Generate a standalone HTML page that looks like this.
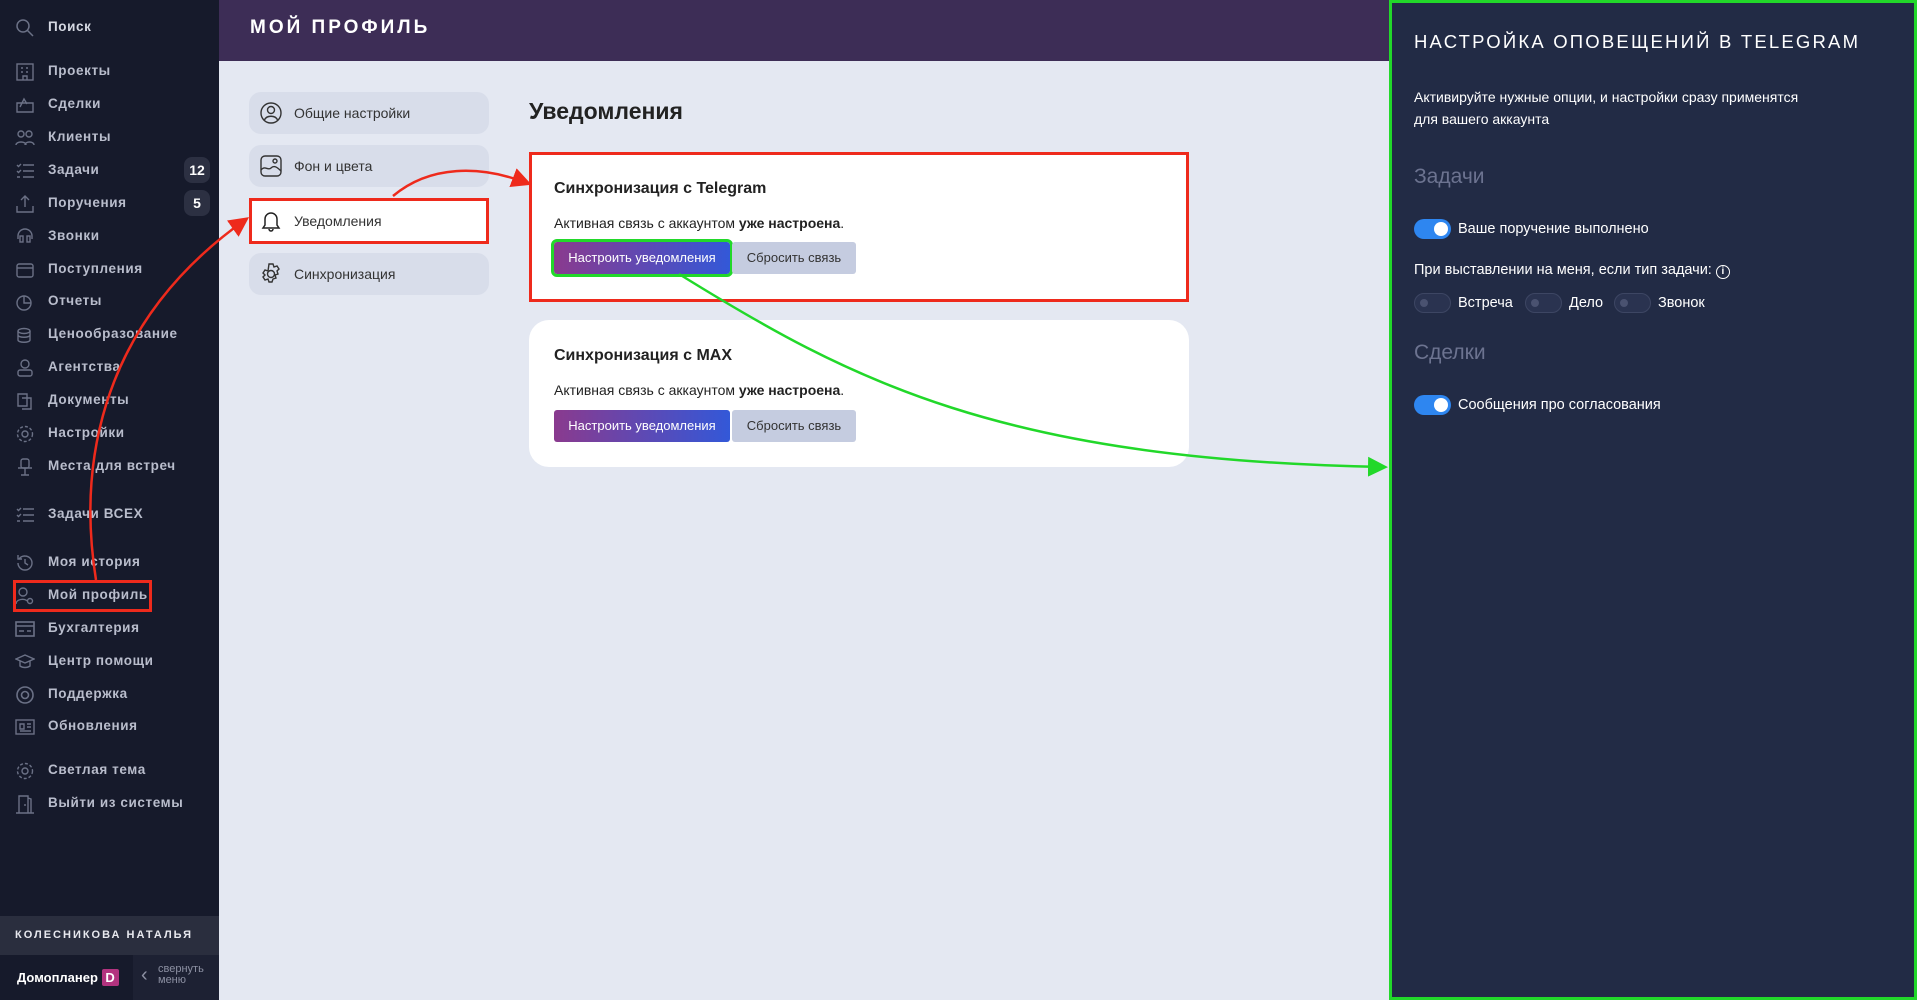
<!DOCTYPE html>
<html><head><meta charset="utf-8"><style>
*{box-sizing:border-box;margin:0;padding:0}
body{width:1917px;height:1000px;overflow:hidden;background:#e4e8f2;font-family:"Liberation Sans",sans-serif;position:relative}
.sb{position:absolute;left:0;top:0;width:219px;height:1000px;background:#161a2b}
.it{position:absolute;left:0;width:219px;height:24px;color:#b9bdcc;font-size:13.5px;font-weight:bold;letter-spacing:.6px;line-height:24px}
.it span{position:absolute;left:48px}
.it svg{position:absolute;left:15px;top:3px}
.badge{position:absolute;right:9px;top:-1px;background:#2c3042;color:#fff;border-radius:8px;width:26px;height:26px;text-align:center;line-height:26px;font-size:14px;letter-spacing:0}
.hdr{position:absolute;left:219px;top:0;width:1171px;height:61px;background:#3d2d56;color:#fff;font-size:19px;letter-spacing:3px;padding:17px 0 0 31px;font-weight:bold}
.mi{position:absolute;left:249px;width:240px;height:42px;background:#d8ddea;border-radius:12px;font-size:14px;color:#333;line-height:42px;padding-left:45px}
.mi svg{position:absolute;left:11px;top:10px}
.card{position:absolute;left:529px;width:660px;background:#fff;border-radius:20px}
.ct{position:absolute;left:25px;font-size:16px;font-weight:bold;color:#222}
.cx{position:absolute;left:25px;font-size:14px;color:#222}
.b1{position:absolute;left:25px;width:176px;height:32px;border-radius:3px;background:linear-gradient(90deg,#8a3a8e,#3358d8);color:#fff;font-size:13px;text-align:center;line-height:32px}
.b2{position:absolute;left:203px;width:124px;height:32px;border-radius:3px;background:#c5cce0;color:#333;font-size:13px;text-align:center;line-height:32px}
.rp{position:absolute;left:1389px;top:0;width:528px;height:1000px;background:#222b45;border:3px solid #22d82a;color:#fff}
.tg{position:absolute;width:37px;height:20px;border-radius:10px;background:#2e86f0}
.tg::after{content:"";position:absolute;right:3px;top:3px;width:14px;height:14px;border-radius:50%;background:#fff}
.tf{position:absolute;width:37px;height:20px;border-radius:10px;background:#2a3350;border:1px solid #3d4663}
.tf::after{content:"";position:absolute;left:5px;top:5px;width:8px;height:8px;border-radius:50%;background:#4a5270}
.rl{position:absolute;font-size:14.5px;color:#fff}
</style></head><body>
<div class="sb">
<div class="it" style="top:15px"><svg width="20" height="20" viewBox="0 0 20 20" fill="none" stroke="#6b7186" stroke-width="1.5"><circle cx="8" cy="8" r="6"/><path d="M12.5 12.5L18 18"/></svg><span style="color:#d5d8e2">Поиск</span></div>
<div class="it" style="top:59px"><svg width="20" height="20" viewBox="0 0 20 20" fill="none" stroke="#6b7186" stroke-width="1.4"><rect x="2" y="2" width="16" height="16"/><path d="M6 6h2M11 6h2M6 10h2M11 10h2M8 18v-4h4v4"/></svg><span>Проекты</span></div>
<div class="it" style="top:92px"><svg width="20" height="20" viewBox="0 0 20 20" fill="none" stroke="#6b7186" stroke-width="1.4"><path d="M2 8h16v9H2zM5 12l4-8 3 5"/></svg><span>Сделки</span></div>
<div class="it" style="top:125px"><svg width="20" height="20" viewBox="0 0 20 20" fill="none" stroke="#6b7186" stroke-width="1.4"><circle cx="6" cy="6" r="3"/><circle cx="14" cy="6" r="3"/><path d="M1 17c0-4 10-4 10 0M10 17c0-4 9-4 9 0"/></svg><span>Клиенты</span></div>
<div class="it" style="top:158px"><svg width="20" height="20" viewBox="0 0 20 20" fill="none" stroke="#6b7186" stroke-width="1.4"><path d="M8 4h11M8 10h11M8 16h11M2 4l1.5 1.5L6 3M2 10l1.5 1.5L6 9M2 16h3"/></svg><span>Задачи</span><div class="badge">12</div></div>
<div class="it" style="top:191px"><svg width="20" height="20" viewBox="0 0 20 20" fill="none" stroke="#6b7186" stroke-width="1.4"><path d="M2 12v6h16v-6M10 13V2M6 6l4-4 4 4"/></svg><span>Поручения</span><div class="badge">5</div></div>
<div class="it" style="top:224px"><svg width="20" height="20" viewBox="0 0 20 20" fill="none" stroke="#6b7186" stroke-width="1.4"><path d="M3 12V9a7 7 0 0114 0v3"/><rect x="5" y="9" width="3" height="6"/><rect x="12" y="9" width="3" height="6"/></svg><span>Звонки</span></div>
<div class="it" style="top:257px"><svg width="20" height="20" viewBox="0 0 20 20" fill="none" stroke="#6b7186" stroke-width="1.4"><rect x="2" y="4" width="16" height="13" rx="2"/><path d="M2 8h16"/></svg><span>Поступления</span></div>
<div class="it" style="top:289px"><svg width="20" height="20" viewBox="0 0 20 20" fill="none" stroke="#6b7186" stroke-width="1.4"><circle cx="9" cy="11" r="7"/><path d="M9 4v7h7"/></svg><span>Отчеты</span></div>
<div class="it" style="top:322px"><svg width="20" height="20" viewBox="0 0 20 20" fill="none" stroke="#6b7186" stroke-width="1.4"><ellipse cx="9" cy="6" rx="6" ry="2.5"/><path d="M3 6v9c0 3 12 3 12 0V6M3 10c0 3 12 3 12 0"/></svg><span>Ценообразование</span></div>
<div class="it" style="top:355px"><svg width="20" height="20" viewBox="0 0 20 20" fill="none" stroke="#6b7186" stroke-width="1.4"><circle cx="10" cy="6" r="4"/><rect x="3" y="12" width="14" height="6" rx="2"/></svg><span>Агентства</span></div>
<div class="it" style="top:388px"><svg width="20" height="20" viewBox="0 0 20 20" fill="none" stroke="#6b7186" stroke-width="1.4"><path d="M3 3h9v12H3zM7 7h9v11H7"/></svg><span>Документы</span></div>
<div class="it" style="top:421px"><svg width="20" height="20" viewBox="0 0 20 20" fill="none" stroke="#6b7186" stroke-width="1.4"><circle cx="10" cy="10" r="3"/><circle cx="10" cy="10" r="7.5" stroke-dasharray="3 2"/></svg><span>Настройки</span></div>
<div class="it" style="top:454px"><svg width="20" height="20" viewBox="0 0 20 20" fill="none" stroke="#6b7186" stroke-width="1.4"><rect x="6" y="2" width="8" height="9" rx="2"/><path d="M3 11h14M10 11v7M6 18h8"/></svg><span>Места для встреч</span></div>
<div class="it" style="top:502px"><svg width="20" height="20" viewBox="0 0 20 20" fill="none" stroke="#6b7186" stroke-width="1.4"><path d="M8 4h11M8 10h11M8 16h11M2 4l1.5 1.5L6 3M2 10l1.5 1.5L6 9M2 16h3"/></svg><span>Задачи ВСЕХ</span></div>
<div class="it" style="top:550px"><svg width="20" height="20" viewBox="0 0 20 20" fill="none" stroke="#6b7186" stroke-width="1.4"><path d="M3 10a7 7 0 107-7 7 7 0 00-6 3M3 2v4h4M10 6v4l3 2"/></svg><span>Моя история</span></div>
<div class="it" style="top:583px"><svg width="20" height="20" viewBox="0 0 20 20" fill="none" stroke="#6b7186" stroke-width="1.4"><circle cx="8" cy="6" r="4"/><path d="M1 18c0-5 9-6 11-3"/><circle cx="15" cy="15" r="2.5"/></svg><span>Мой профиль</span></div>
<div class="it" style="top:616px"><svg width="20" height="20" viewBox="0 0 20 20" fill="none" stroke="#6b7186" stroke-width="1.6"><rect x="1" y="3" width="18" height="14"/><path d="M1 7h18M4 12h5M12 12h4"/></svg><span>Бухгалтерия</span></div>
<div class="it" style="top:649px"><svg width="20" height="20" viewBox="0 0 20 20" fill="none" stroke="#6b7186" stroke-width="1.4"><path d="M1 7l9-4 9 4-9 4zM5 9v5c3 2 7 2 10 0V9"/></svg><span>Центр помощи</span></div>
<div class="it" style="top:682px"><svg width="20" height="20" viewBox="0 0 20 20" fill="none" stroke="#6b7186" stroke-width="1.6"><circle cx="10" cy="10" r="8"/><circle cx="10" cy="10" r="3.5"/></svg><span>Поддержка</span></div>
<div class="it" style="top:714px"><svg width="20" height="20" viewBox="0 0 20 20" fill="none" stroke="#6b7186" stroke-width="1.4"><rect x="1" y="3" width="18" height="14"/><path d="M5 7h4v5H5zM12 7h4M12 10h4M5 14h11"/></svg><span>Обновления</span></div>
<div class="it" style="top:758px"><svg width="20" height="20" viewBox="0 0 20 20" fill="none" stroke="#6b7186" stroke-width="1.4"><circle cx="10" cy="10" r="3"/><circle cx="10" cy="10" r="7.5" stroke-dasharray="3 2"/></svg><span>Светлая тема</span></div>
<div class="it" style="top:791px"><svg width="20" height="20" viewBox="0 0 20 20" fill="none" stroke="#6b7186" stroke-width="1.4"><path d="M1 19h18M4 19V2h9v17M13 4l3 1v14M10 10v2"/></svg><span>Выйти из системы</span></div>
<div style="position:absolute;left:0;top:916px;width:219px;height:39px;background:#2a2e3e;color:#e8e9ef;font-size:11px;font-weight:bold;letter-spacing:2px;line-height:39px;padding-left:15px">КОЛЕСНИКОВА НАТАЛЬЯ</div>
<div style="position:absolute;left:0;top:955px;width:133px;height:45px;background:#161a2b;color:#fff;font-size:13px;font-weight:bold;line-height:45px;padding-left:17px">Домопланер <span style="display:inline-block;background:#b3337f;color:#fff;width:17px;height:17px;line-height:17px;text-align:center;font-size:13px;border-radius:2px">D</span></div>
<div style="position:absolute;left:133px;top:955px;width:86px;height:45px;background:#1d2133;color:#8d91a3;font-size:11px;line-height:11px;padding:9px 0 0 25px">свернуть<br>меню<span style="position:absolute;left:8px;top:10px;font-size:20px;line-height:20px">‹</span></div>
</div>
<div class="hdr">МОЙ ПРОФИЛЬ</div>
<div class="mi" style="top:92px"><svg width="22" height="22" viewBox="0 0 22 22" fill="none" stroke="#333" stroke-width="1.4"><circle cx="11" cy="11" r="10"/><circle cx="11" cy="8" r="3.5"/><path d="M4.5 18c2-5 11-5 13 0"/></svg>Общие настройки</div>
<div class="mi" style="top:145px"><svg width="22" height="22" viewBox="0 0 22 22" fill="none" stroke="#333" stroke-width="1.4"><rect x="1" y="1" width="20" height="20" rx="4"/><circle cx="15" cy="6" r="2"/><path d="M1 15c4-5 7 1 10-2s6-1 10 3"/></svg>Фон и цвета</div>
<div class="mi" style="top:198px;height:46px;background:#fff;border:3px solid #ee2a1c;border-radius:0;line-height:40px;padding-left:42px"><svg style="left:8px;top:9px" width="22" height="22" viewBox="0 0 22 22" fill="none" stroke="#222" stroke-width="1.5"><path d="M5 15V9a6 6 0 0112 0v6l2 3H3zM9 19a2 2 0 004 0"/></svg>Уведомления</div>
<div class="mi" style="top:253px"><svg width="22" height="22" viewBox="0 0 22 22" fill="none" stroke="#333" stroke-width="1.4"><circle cx="11" cy="11" r="3.5"/><path d="M9 1h4l1 3 3-1 2 3-2 2 1 3-3 1 1 3-3 1-1 3H9l-1-3-3 1-2-3 2-2-2-2 2-3 3 1z"/></svg>Синхронизация</div>
<div style="position:absolute;left:529px;top:98px;font-size:23px;font-weight:bold;color:#222">Уведомления</div>
<div class="card" style="top:152px;height:150px;border:3px solid #ee2a1c;border-radius:0">
<div class="ct" style="top:25px;left:22px">Синхронизация с Telegram</div>
<div class="cx" style="top:60px;left:22px">Активная связь с аккаунтом <b>уже настроена</b>.</div>
<div class="b1" style="top:87px;left:22px;outline:3px solid #22d82a">Настроить уведомления</div>
<div class="b2" style="top:87px;left:200px">Сбросить связь</div>
</div>
<div class="card" style="top:320px;height:147px">
<div class="ct" style="top:27px">Синхронизация с MAX</div>
<div class="cx" style="top:62px">Активная связь с аккаунтом <b>уже настроена</b>.</div>
<div class="b1" style="top:90px">Настроить уведомления</div>
<div class="b2" style="top:90px">Сбросить связь</div>
</div>
<div class="rp">
<div style="position:absolute;left:22px;top:28px;font-size:18.5px;letter-spacing:2.2px">НАСТРОЙКА ОПОВЕЩЕНИЙ В TELEGRAM</div>
<div style="position:absolute;left:22px;top:83px;font-size:14px;line-height:22px">Активируйте нужные опции, и настройки сразу применятся<br>для вашего аккаунта</div>
<div style="position:absolute;left:22px;top:162px;font-size:21px;color:#6c7390">Задачи</div>
<div class="tg" style="left:22px;top:216px"></div><div class="rl" style="left:66px;top:218px">Ваше поручение выполнено</div>
<div class="rl" style="left:22px;top:259px">При выставлении на меня, если тип задачи: <span style="display:inline-block;width:14px;height:14px;border:1.5px solid #fff;border-radius:50%;font-size:10px;text-align:center;line-height:11px;font-weight:bold">i</span></div>
<div class="tf" style="left:22px;top:290px"></div><div class="rl" style="left:66px;top:292px">Встреча</div>
<div class="tf" style="left:133px;top:290px"></div><div class="rl" style="left:177px;top:292px">Дело</div>
<div class="tf" style="left:222px;top:290px"></div><div class="rl" style="left:266px;top:292px">Звонок</div>
<div style="position:absolute;left:22px;top:338px;font-size:21px;color:#6c7390">Сделки</div>
<div class="tg" style="left:22px;top:392px"></div><div class="rl" style="left:66px;top:394px">Сообщения про согласования</div>
</div>
<div style="position:absolute;left:13px;top:580px;width:139px;height:32px;border:3px solid #ee2a1c"></div>
<svg style="position:absolute;left:0;top:0" width="1917" height="1000" fill="none">
<defs><marker id="ar" markerWidth="8" markerHeight="8" refX="6" refY="4" orient="auto"><path d="M0 0L8 4L0 8z" fill="#ee2a1c"/></marker>
<marker id="ag" markerWidth="8" markerHeight="8" refX="6" refY="4" orient="auto"><path d="M0 0L8 4L0 8z" fill="#22d82a"/></marker></defs>
<path d="M96 580C80 480 90 330 245 220" stroke="#ee2a1c" stroke-width="2.5" marker-end="url(#ar)"/>
<path d="M393 196C430 165 480 165 527 183" stroke="#ee2a1c" stroke-width="2.5" marker-end="url(#ar)"/>
<path d="M679 274C850 380 1000 460 1383 467" stroke="#22d82a" stroke-width="2.5" marker-end="url(#ag)"/>
</svg>
</body></html>
